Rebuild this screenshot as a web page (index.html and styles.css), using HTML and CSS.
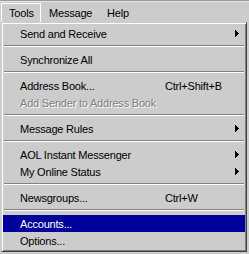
FILE: index.html
```html
<!DOCTYPE html>
<html lang="en">
<head>
  <meta charset="UTF-8" />
  <title>Tools menu</title>
  <link rel="stylesheet" href="styles.css">
</head>
<body>
  <div class="menubar">
    <span class="bar-item tools active">Tools</span>
    <span class="bar-item message">Message</span>
    <span class="bar-item">Help</span>
  </div>

  <div class="menu">
    <div class="item"><span class="label">Send and Receive</span><svg class="arrow" width="4" height="7"><path d="M0 0h1v7H0zM1 1h1v5H1zM2 2h1v3H2zM3 3h1v1H3z"/></svg></div>
    <div class="sep"></div>
    <div class="item"><span class="label">Synchronize All</span></div>
    <div class="sep"></div>
    <div class="item"><span class="label">Address Book...</span><span class="keys">Ctrl+Shift+B</span></div>
    <div class="item disabled"><span class="label">Add Sender to Address Book</span></div>
    <div class="sep"></div>
    <div class="item"><span class="label">Message Rules</span><svg class="arrow" width="4" height="7"><path d="M0 0h1v7H0zM1 1h1v5H1zM2 2h1v3H2zM3 3h1v1H3z"/></svg></div>
    <div class="sep"></div>
    <div class="item"><span class="label">AOL Instant Messenger</span><svg class="arrow" width="4" height="7"><path d="M0 0h1v7H0zM1 1h1v5H1zM2 2h1v3H2zM3 3h1v1H3z"/></svg></div>
    <div class="item"><span class="label">My Online Status</span><svg class="arrow" width="4" height="7"><path d="M0 0h1v7H0zM1 1h1v5H1zM2 2h1v3H2zM3 3h1v1H3z"/></svg></div>
    <div class="sep"></div>
    <div class="item"><span class="label">Newsgroups...</span><span class="keys">Ctrl+W</span></div>
    <div class="sep"></div>
    <div class="item selected"><span class="label">Accounts...</span></div>
    <div class="item"><span class="label">Options...</span></div>
  </div>
</body>
</html>
```

FILE: styles.css
```css
body {
  margin: 0;
  background: #cccccc;
  color: #000;
  font-family: "Liberation Sans", Arial, sans-serif;
  font-size: 11px;
  letter-spacing: -0.2px;
  height: 254px;
  overflow: hidden;
}

.menubar {
  display: flex;
  height: 19px;
  padding-top: 2px;
  border-top: 1px solid #9a9a9a;
  box-shadow: inset 0 1px #e4e4e4;
}
.bar-item {
  display: flex;
  align-items: center;
  height: 19px;
  box-sizing: border-box;
  padding: 0 7px;
  border: 1px solid transparent;
  border-bottom: none;
}
.bar-item.tools { width: 40px; margin-left: 1px; }
.bar-item.message { width: 58px; }
.bar-item.active {
  border-color: #fff;
}

.menu {
  width: 246px;
  margin-left: 1px;
  box-sizing: border-box;
  border: 1px solid;
  border-color: #cccccc #404040 #404040 #cccccc;
  box-shadow: inset 1px 1px #fff, inset -1px -1px #808080;
  padding: 2px 1px;
}
.item {
  display: flex;
  align-items: center;
  height: 17px;
  padding-left: 17px;
  white-space: nowrap;
}
.label { width: 145px; }
.arrow { margin-left: auto; margin-right: 6px; fill: #000; }
.item.disabled { color: #808080; text-shadow: 1px 1px #fff; }
.item.selected { background: #00009a; color: #fff; }

.sep {
  height: 9px;
  box-sizing: border-box;
  padding-top: 3px;
  margin: 0 1px;
}
.sep::before {
  content: "";
  display: block;
  height: 1px;
  background: #808080;
  border-bottom: 1px solid #fff;
}
```
